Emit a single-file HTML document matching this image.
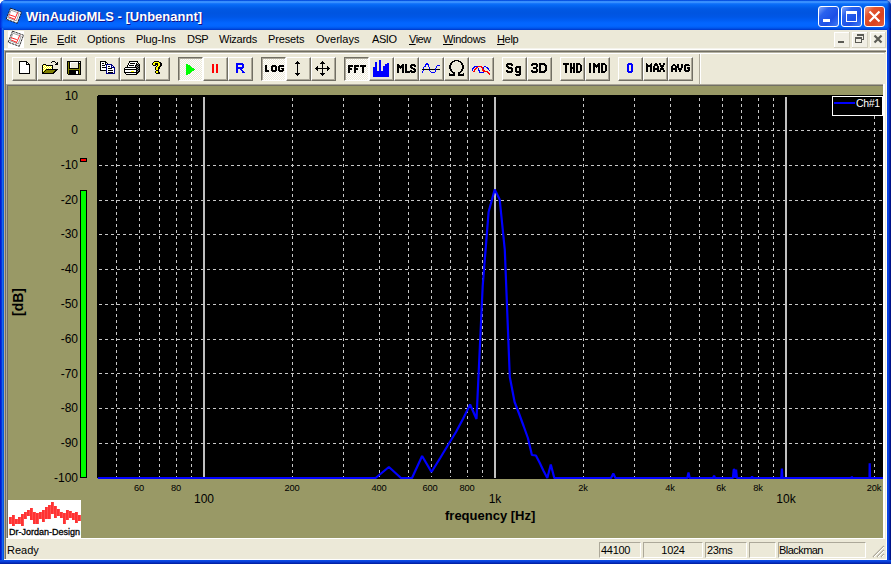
<!DOCTYPE html>
<html><head><meta charset="utf-8"><title>WinAudioMLS - [Unbenannt]</title>
<style>
html,body{margin:0;padding:0;background:#fff;}
body{width:891px;height:564px;overflow:hidden;position:relative;font-family:"Liberation Sans",sans-serif;}
#win{position:absolute;left:0;top:0;width:891px;height:564px;background:#0d4fe6;border-radius:6px 6px 0 0;overflow:hidden;}
#title{position:absolute;left:0;top:0;width:891px;height:30px;
 background:linear-gradient(to bottom,#0040d6 0px,#0d5fea 0.800px,#3d95ff 1.600px,#378fff 2.600px,#1273fa 3.600px,#0569f5 5px,#0360ec 7px,#0058e4 9px,#0055e0 13px,#0057e6 17px,#005df3 20px,#0366ff 23px,#0366ff 26px,#0058ee 28px,#0036c8 30px);}
#title .cap{position:absolute;left:26px;top:9px;font-size:13px;font-weight:bold;color:#fff;text-shadow:1px 1px #0f1089;white-space:nowrap;letter-spacing:0px;}
.bl{position:absolute;top:28px;left:0;width:4px;height:564px;background:linear-gradient(to right,#0019cf 0,#0019cf 1px,#0831d9 1px,#0831d9 2px,#166aee 2px,#166aee 3px,#0855dd 3px);mix-blend-mode:normal;}
.br{position:absolute;top:28px;left:887px;width:4px;height:564px;background:linear-gradient(to right,#0540e8 0,#0540e8 1px,#0a42d8 1px,#0a42d8 2px,#0528b0 2px,#0528b0 3px,#001488 3px);}
.bb{position:absolute;top:560px;left:0;width:891px;height:4px;background:linear-gradient(to bottom,#0d4fe6 0%,#0a42dc 35%,#0530c0 65%,#001a9a 100%);}
#body{position:absolute;left:4px;top:30px;width:883px;height:530px;background:#ece9d8;}
/* all children below positioned in page coords via #abs */
#abs{position:absolute;left:0;top:0;width:891px;height:564px;}
.mi{position:absolute;top:33px;font-size:11px;color:#000;white-space:nowrap;line-height:13px;}
.mi u{text-decoration:underline;text-underline-offset:1px;}
.wb{position:absolute;top:6px;width:21px;height:21px;border-radius:3px;box-sizing:border-box;border:1px solid #fff;}
.tb{position:absolute;top:57px;width:25px;height:24px;box-sizing:border-box;background:#ece9d8;
 border-top:1px solid #fff;border-left:1px solid #fff;border-right:1px solid #716f64;border-bottom:1px solid #716f64;}
.tb:after{content:"";position:absolute;left:0;top:0;right:0;bottom:0;border-right:1px solid #aca899;border-bottom:1px solid #aca899;}
.tb svg{position:absolute;left:-1px;top:-1px;}
.tb.dn{background:repeating-conic-gradient(#fff 0% 25%,#ece9d8 0% 50%) 0 0/2px 2px;border-top:1px solid #716f64;border-left:1px solid #716f64;border-right:1px solid #fff;border-bottom:1px solid #fff;}
.tb.dn:after{border:none;border-top:1px solid #aca899;border-left:1px solid #aca899;}
.tb.dn svg{left:0px;top:0px;}
#client{position:absolute;left:8px;top:86px;width:875px;height:452px;background:#999966;}
.plot{position:absolute;left:97px;top:95px;}
.yl{position:absolute;left:30px;width:48px;text-align:right;font-size:12px;line-height:14px;color:#000;}
.xs{position:absolute;top:482px;width:40px;text-align:center;font-size:9.300px;letter-spacing:-0.100px;line-height:12px;color:#000;}
.xb{position:absolute;top:492px;width:40px;text-align:center;font-size:12px;line-height:15px;color:#000;}
.pane{position:absolute;top:542px;height:16px;box-sizing:border-box;border-top:1px solid #aca899;border-left:1px solid #aca899;border-right:1px solid #fff;border-bottom:1px solid #fff;font-size:11px;line-height:14px;padding-left:2px;white-space:nowrap;overflow:hidden;}
</style></head><body>
<div style="position:absolute;left:881px;top:0;width:10px;height:10px;background:#8fa6e2"></div>
<div id="win">
<div id="title"><div class="cap">WinAudioMLS - [Unbenannt]</div></div>
<div style="position:absolute;left:0;top:0;width:3px;height:30px;background:linear-gradient(to right,rgba(0,25,207,0.850),rgba(0,25,207,0))"></div><div style="position:absolute;left:887px;top:0;width:4px;height:30px;background:linear-gradient(to right,rgba(0,20,136,0),rgba(0,20,136,0.900))"></div><div class="bl"></div><div class="br"></div><div class="bb"></div>
<div id="body"></div>
<div id="abs">
<!-- title icon -->
<svg style="position:absolute;left:5px;top:7px" width="18" height="18" viewBox="0 0 18 18"><path d="M5.500 1.200L16.500 5.200L12.300 16.300L1.200 12.200Z" fill="#fff" stroke="#111" stroke-width="0.900" stroke-dasharray="2.500 0.700"/><path d="M6 3.200L14.200 6.200L11.300 13.800L3 10.800Z" fill="none" stroke="#777" stroke-width="0.700"/><path d="M3.800 7.600l6 2M4 10l5 2M12.800 5.300l-3.600 8" stroke="#f22" stroke-width="1" fill="none"/></svg>
<!-- window buttons -->
<div class="wb" style="left:818px;background:linear-gradient(135deg,#86a8fa 0%,#2a62ee 28%,#1c4fe6 65%,#3f7cf6 100%)"><div style="position:absolute;left:4px;top:12px;width:7px;height:3px;background:#fff"></div></div>
<div class="wb" style="left:841px;background:linear-gradient(135deg,#86a8fa 0%,#2a62ee 28%,#1c4fe6 65%,#3f7cf6 100%)"><div style="position:absolute;left:4px;top:4px;width:11px;height:11px;box-sizing:border-box;border:1px solid #fff;border-top:3px solid #fff"></div></div>
<div class="wb" style="left:864px;background:linear-gradient(135deg,#f0a48e 0%,#e2552f 28%,#d9421e 65%,#e4603f 100%)"><svg width="19" height="19" viewBox="0 0 19 19" style="position:absolute;left:0;top:0"><path d="M4.500 4.500l10 10M14.500 4.500l-10 10" stroke="#fff" stroke-width="2.200"/></svg></div>
<!-- menu bar -->
<div style="position:absolute;left:8px;top:31px;width:16px;height:17px;background:#fff"></div>
<svg style="position:absolute;left:7px;top:30px" width="18" height="18" viewBox="0 0 18 18"><path d="M5.500 1.200L16.500 5.200L12.300 16.300L1.200 12.200Z" fill="#fff" stroke="#111" stroke-width="0.900" stroke-dasharray="2.500 0.700"/><path d="M6 3.200L14.200 6.200L11.300 13.800L3 10.800Z" fill="none" stroke="#777" stroke-width="0.700"/><path d="M3.800 7.600l6 2M4 10l5 2M12.800 5.300l-3.600 8" stroke="#f22" stroke-width="1" fill="none"/></svg>
<span class="mi" style="left:30px;letter-spacing:0px"><u>F</u>ile</span>
<span class="mi" style="left:57px;letter-spacing:0px"><u>E</u>dit</span>
<span class="mi" style="left:87px;letter-spacing:0px">Options</span>
<span class="mi" style="left:136px;letter-spacing:-0.1px">Plug-Ins</span>
<span class="mi" style="left:187px;letter-spacing:-0.5px">DSP</span>
<span class="mi" style="left:219px;letter-spacing:-0.25px">Wizards</span>
<span class="mi" style="left:268px;letter-spacing:-0.15px">Presets</span>
<span class="mi" style="left:316px;letter-spacing:0px">Overlays</span>
<span class="mi" style="left:372px;letter-spacing:-0.4px">ASIO</span>
<span class="mi" style="left:409px;letter-spacing:-0.5px"><u>V</u>iew</span>
<span class="mi" style="left:443px;letter-spacing:-0.3px"><u>W</u>indows</span>
<span class="mi" style="left:497px;letter-spacing:-0.35px"><u>H</u>elp</span>
<!-- mdi buttons -->
<svg style="position:absolute;left:834px;top:32px" width="53" height="16" viewBox="0 0 53 16" shape-rendering="crispEdges">
<g fill="#f1efe5"><rect x="0" y="0" width="16" height="16"/><rect x="18" y="0" width="16" height="16"/><rect x="36" y="0" width="16" height="16"/></g>
<g fill="#fff"><rect x="0" y="0" width="16" height="1"/><rect x="0" y="0" width="1" height="16"/><rect x="18" y="0" width="16" height="1"/><rect x="18" y="0" width="1" height="16"/><rect x="36" y="0" width="16" height="1"/><rect x="36" y="0" width="1" height="16"/></g>
<g fill="#d3d0c0"><rect x="0" y="15" width="16" height="1"/><rect x="15" y="0" width="1" height="16"/><rect x="18" y="15" width="16" height="1"/><rect x="33" y="0" width="1" height="16"/><rect x="36" y="15" width="16" height="1"/><rect x="51" y="0" width="1" height="16"/></g>
<g fill="#5b5b55"><rect x="4" y="9" width="6" height="2"/>
<rect x="23" y="2" width="7" height="2"/><rect x="29" y="2" width="1" height="6"/><rect x="27" y="7" width="3" height="1"/>
<rect x="21" y="5" width="7" height="2"/><rect x="21" y="5" width="1" height="6"/><rect x="27" y="5" width="1" height="6"/><rect x="21" y="10" width="7" height="1"/></g>
<path d="M40.500 3.500l7 7M47.500 3.500l-7 7" stroke="#5b5b55" stroke-width="2.200" shape-rendering="auto"/>
</svg>
<!-- toolbar frame -->
<div style="position:absolute;left:4px;top:48px;width:883px;height:1px;background:#f6f4ec"></div>
<div style="position:absolute;left:4px;top:49px;width:883px;height:1px;background:#fff"></div>
<div style="position:absolute;left:4px;top:50px;width:883px;height:1px;background:#aca899"></div>
<div style="position:absolute;left:4px;top:51px;width:883px;height:1px;background:#716f64"></div>
<div style="position:absolute;left:5px;top:52px;width:880px;height:1px;background:#b5b2a2"></div>
<div style="position:absolute;left:6px;top:53px;width:878px;height:1px;background:#fff"></div>
<div style="position:absolute;left:4px;top:50px;width:1px;height:509px;background:#b4ac98"></div>
<div style="position:absolute;left:5px;top:51px;width:1px;height:508px;background:#716f64"></div>
<div style="position:absolute;left:6px;top:53px;width:1px;height:31px;background:#fffbf0"></div>
<div style="position:absolute;left:885px;top:52px;width:1px;height:507px;background:#ece9d8"></div>
<div style="position:absolute;left:886px;top:50px;width:1px;height:510px;background:#fffff4"></div>
<div style="position:absolute;left:4px;top:559px;width:883px;height:1px;background:#fff"></div>
<div style="position:absolute;left:699px;top:54px;width:1px;height:30px;background:#aca899"></div>
<div style="position:absolute;left:700px;top:54px;width:1px;height:30px;background:#fff"></div>
<div class="tb" style="left:12px"></div>
<div class="tb" style="left:37px"></div>
<div class="tb" style="left:62px"></div>
<div class="tb" style="left:95px"></div>
<div class="tb" style="left:120px"></div>
<div class="tb" style="left:145px"></div>
<div class="tb dn" style="left:178px"></div>
<div class="tb" style="left:203px"></div>
<div class="tb" style="left:228px"></div>
<div class="tb dn" style="left:261px"></div>
<div class="tb" style="left:286px"></div>
<div class="tb" style="left:311px"></div>
<div class="tb dn" style="left:344px"></div>
<div class="tb" style="left:369px"></div>
<div class="tb" style="left:394px"></div>
<div class="tb" style="left:419px"></div>
<div class="tb" style="left:444px"></div>
<div class="tb" style="left:469px"></div>
<div class="tb" style="left:502px"></div>
<div class="tb" style="left:527px"></div>
<div class="tb" style="left:560px"></div>
<div class="tb" style="left:585px"></div>
<div class="tb" style="left:618px"></div>
<div class="tb" style="left:643px"></div>
<div class="tb" style="left:668px"></div>
<svg style="position:absolute;left:0;top:50px" width="891" height="36" viewBox="0 0 891 36" shape-rendering="crispEdges"><rect x="19" y="11" width="8" height="1" fill="#000"/><rect x="19" y="12" width="1" height="1" fill="#000"/><rect x="20" y="12" width="6" height="1" fill="#fff"/><rect x="26" y="12" width="2" height="1" fill="#000"/><rect x="19" y="13" width="1" height="1" fill="#000"/><rect x="20" y="13" width="6" height="1" fill="#fff"/><rect x="26" y="13" width="1" height="1" fill="#000"/><rect x="27" y="13" width="1" height="1" fill="#fff"/><rect x="28" y="13" width="1" height="1" fill="#000"/><rect x="19" y="14" width="1" height="1" fill="#000"/><rect x="20" y="14" width="6" height="1" fill="#fff"/><rect x="26" y="14" width="4" height="1" fill="#000"/><rect x="19" y="15" width="1" height="1" fill="#000"/><rect x="20" y="15" width="9" height="1" fill="#fff"/><rect x="29" y="15" width="1" height="1" fill="#000"/><rect x="19" y="16" width="1" height="1" fill="#000"/><rect x="20" y="16" width="9" height="1" fill="#fff"/><rect x="29" y="16" width="1" height="1" fill="#000"/><rect x="19" y="17" width="1" height="1" fill="#000"/><rect x="20" y="17" width="9" height="1" fill="#fff"/><rect x="29" y="17" width="1" height="1" fill="#000"/><rect x="19" y="18" width="1" height="1" fill="#000"/><rect x="20" y="18" width="9" height="1" fill="#fff"/><rect x="29" y="18" width="1" height="1" fill="#000"/><rect x="19" y="19" width="1" height="1" fill="#000"/><rect x="20" y="19" width="9" height="1" fill="#fff"/><rect x="29" y="19" width="1" height="1" fill="#000"/><rect x="19" y="20" width="1" height="1" fill="#000"/><rect x="20" y="20" width="9" height="1" fill="#fff"/><rect x="29" y="20" width="1" height="1" fill="#000"/><rect x="19" y="21" width="1" height="1" fill="#000"/><rect x="20" y="21" width="9" height="1" fill="#fff"/><rect x="29" y="21" width="1" height="1" fill="#000"/><rect x="19" y="22" width="1" height="1" fill="#000"/><rect x="20" y="22" width="9" height="1" fill="#fff"/><rect x="29" y="22" width="1" height="1" fill="#000"/><rect x="19" y="23" width="11" height="1" fill="#000"/><rect x="52" y="11" width="3" height="1" fill="#000"/><rect x="51" y="12" width="1" height="1" fill="#000"/><rect x="55" y="12" width="1" height="1" fill="#000"/><rect x="57" y="12" width="1" height="1" fill="#000"/><rect x="56" y="13" width="2" height="1" fill="#000"/><rect x="43" y="14" width="3" height="1" fill="#000"/><rect x="55" y="14" width="3" height="1" fill="#000"/><rect x="42" y="15" width="1" height="1" fill="#000"/><rect x="43" y="15" width="1" height="1" fill="#ff0"/><rect x="44" y="15" width="1" height="1" fill="#fff"/><rect x="45" y="15" width="1" height="1" fill="#ff0"/><rect x="46" y="15" width="7" height="1" fill="#000"/><rect x="42" y="16" width="1" height="1" fill="#000"/><rect x="43" y="16" width="1" height="1" fill="#fff"/><rect x="44" y="16" width="1" height="1" fill="#ff0"/><rect x="45" y="16" width="1" height="1" fill="#fff"/><rect x="46" y="16" width="1" height="1" fill="#ff0"/><rect x="47" y="16" width="1" height="1" fill="#fff"/><rect x="48" y="16" width="1" height="1" fill="#ff0"/><rect x="49" y="16" width="1" height="1" fill="#fff"/><rect x="50" y="16" width="1" height="1" fill="#ff0"/><rect x="51" y="16" width="1" height="1" fill="#fff"/><rect x="52" y="16" width="1" height="1" fill="#000"/><rect x="42" y="17" width="1" height="1" fill="#000"/><rect x="43" y="17" width="1" height="1" fill="#ff0"/><rect x="44" y="17" width="1" height="1" fill="#fff"/><rect x="45" y="17" width="1" height="1" fill="#ff0"/><rect x="46" y="17" width="1" height="1" fill="#fff"/><rect x="47" y="17" width="1" height="1" fill="#ff0"/><rect x="48" y="17" width="1" height="1" fill="#fff"/><rect x="49" y="17" width="1" height="1" fill="#ff0"/><rect x="50" y="17" width="1" height="1" fill="#fff"/><rect x="51" y="17" width="1" height="1" fill="#ff0"/><rect x="52" y="17" width="1" height="1" fill="#000"/><rect x="42" y="18" width="1" height="1" fill="#000"/><rect x="43" y="18" width="1" height="1" fill="#fff"/><rect x="44" y="18" width="1" height="1" fill="#ff0"/><rect x="45" y="18" width="1" height="1" fill="#fff"/><rect x="46" y="18" width="1" height="1" fill="#ff0"/><rect x="47" y="18" width="1" height="1" fill="#fff"/><rect x="48" y="18" width="1" height="1" fill="#ff0"/><rect x="49" y="18" width="1" height="1" fill="#fff"/><rect x="50" y="18" width="1" height="1" fill="#ff0"/><rect x="51" y="18" width="1" height="1" fill="#fff"/><rect x="52" y="18" width="1" height="1" fill="#000"/><rect x="42" y="19" width="1" height="1" fill="#000"/><rect x="43" y="19" width="1" height="1" fill="#ff0"/><rect x="44" y="19" width="1" height="1" fill="#fff"/><rect x="45" y="19" width="1" height="1" fill="#ff0"/><rect x="46" y="19" width="12" height="1" fill="#000"/><rect x="42" y="20" width="1" height="1" fill="#000"/><rect x="43" y="20" width="1" height="1" fill="#fff"/><rect x="44" y="20" width="1" height="1" fill="#ff0"/><rect x="45" y="20" width="1" height="1" fill="#000"/><rect x="46" y="20" width="9" height="1" fill="#808000"/><rect x="55" y="20" width="2" height="1" fill="#000"/><rect x="42" y="21" width="1" height="1" fill="#000"/><rect x="43" y="21" width="1" height="1" fill="#ff0"/><rect x="44" y="21" width="1" height="1" fill="#000"/><rect x="45" y="21" width="9" height="1" fill="#808000"/><rect x="54" y="21" width="2" height="1" fill="#000"/><rect x="42" y="22" width="2" height="1" fill="#000"/><rect x="44" y="22" width="9" height="1" fill="#808000"/><rect x="53" y="22" width="2" height="1" fill="#000"/><rect x="42" y="23" width="12" height="1" fill="#000"/><rect x="67" y="11" width="14" height="1" fill="#000"/><rect x="67" y="12" width="1" height="1" fill="#000"/><rect x="68" y="12" width="1" height="1" fill="#808000"/><rect x="69" y="12" width="1" height="1" fill="#000"/><rect x="70" y="12" width="8" height="1" fill="#fff"/><rect x="78" y="12" width="1" height="1" fill="#000"/><rect x="79" y="12" width="1" height="1" fill="#fff"/><rect x="80" y="12" width="1" height="1" fill="#000"/><rect x="67" y="13" width="1" height="1" fill="#000"/><rect x="68" y="13" width="1" height="1" fill="#808000"/><rect x="69" y="13" width="1" height="1" fill="#000"/><rect x="70" y="13" width="1" height="1" fill="#fff"/><rect x="71" y="13" width="7" height="1" fill="#ece9d8"/><rect x="78" y="13" width="3" height="1" fill="#000"/><rect x="67" y="14" width="1" height="1" fill="#000"/><rect x="68" y="14" width="1" height="1" fill="#808000"/><rect x="69" y="14" width="1" height="1" fill="#000"/><rect x="70" y="14" width="1" height="1" fill="#fff"/><rect x="71" y="14" width="7" height="1" fill="#ece9d8"/><rect x="78" y="14" width="1" height="1" fill="#000"/><rect x="79" y="14" width="1" height="1" fill="#808000"/><rect x="80" y="14" width="1" height="1" fill="#000"/><rect x="67" y="15" width="1" height="1" fill="#000"/><rect x="68" y="15" width="1" height="1" fill="#808000"/><rect x="69" y="15" width="1" height="1" fill="#000"/><rect x="70" y="15" width="1" height="1" fill="#fff"/><rect x="71" y="15" width="7" height="1" fill="#ece9d8"/><rect x="78" y="15" width="1" height="1" fill="#000"/><rect x="79" y="15" width="1" height="1" fill="#808000"/><rect x="80" y="15" width="1" height="1" fill="#000"/><rect x="67" y="16" width="1" height="1" fill="#000"/><rect x="68" y="16" width="1" height="1" fill="#808000"/><rect x="69" y="16" width="1" height="1" fill="#000"/><rect x="70" y="16" width="1" height="1" fill="#fff"/><rect x="71" y="16" width="7" height="1" fill="#ece9d8"/><rect x="78" y="16" width="1" height="1" fill="#000"/><rect x="79" y="16" width="1" height="1" fill="#808000"/><rect x="80" y="16" width="1" height="1" fill="#000"/><rect x="67" y="17" width="1" height="1" fill="#000"/><rect x="68" y="17" width="1" height="1" fill="#808000"/><rect x="69" y="17" width="1" height="1" fill="#000"/><rect x="70" y="17" width="1" height="1" fill="#fff"/><rect x="71" y="17" width="7" height="1" fill="#ece9d8"/><rect x="78" y="17" width="1" height="1" fill="#000"/><rect x="79" y="17" width="1" height="1" fill="#808000"/><rect x="80" y="17" width="1" height="1" fill="#000"/><rect x="67" y="18" width="1" height="1" fill="#000"/><rect x="68" y="18" width="1" height="1" fill="#808000"/><rect x="69" y="18" width="10" height="1" fill="#000"/><rect x="79" y="18" width="1" height="1" fill="#808000"/><rect x="80" y="18" width="1" height="1" fill="#000"/><rect x="67" y="19" width="1" height="1" fill="#000"/><rect x="68" y="19" width="12" height="1" fill="#808000"/><rect x="80" y="19" width="1" height="1" fill="#000"/><rect x="67" y="20" width="1" height="1" fill="#000"/><rect x="68" y="20" width="1" height="1" fill="#808000"/><rect x="69" y="20" width="10" height="1" fill="#000"/><rect x="79" y="20" width="1" height="1" fill="#808000"/><rect x="80" y="20" width="1" height="1" fill="#000"/><rect x="67" y="21" width="1" height="1" fill="#000"/><rect x="68" y="21" width="1" height="1" fill="#808000"/><rect x="69" y="21" width="7" height="1" fill="#000"/><rect x="76" y="21" width="2" height="1" fill="#fff"/><rect x="78" y="21" width="1" height="1" fill="#000"/><rect x="79" y="21" width="1" height="1" fill="#808000"/><rect x="80" y="21" width="1" height="1" fill="#000"/><rect x="67" y="22" width="1" height="1" fill="#000"/><rect x="68" y="22" width="1" height="1" fill="#808000"/><rect x="69" y="22" width="7" height="1" fill="#000"/><rect x="76" y="22" width="2" height="1" fill="#fff"/><rect x="78" y="22" width="1" height="1" fill="#000"/><rect x="79" y="22" width="1" height="1" fill="#808000"/><rect x="80" y="22" width="1" height="1" fill="#000"/><rect x="67" y="23" width="1" height="1" fill="#000"/><rect x="68" y="23" width="1" height="1" fill="#808000"/><rect x="69" y="23" width="7" height="1" fill="#000"/><rect x="76" y="23" width="2" height="1" fill="#fff"/><rect x="78" y="23" width="1" height="1" fill="#000"/><rect x="79" y="23" width="1" height="1" fill="#808000"/><rect x="80" y="23" width="1" height="1" fill="#000"/><rect x="68" y="24" width="13" height="1" fill="#000"/><rect x="100" y="11" width="6" height="1" fill="#000"/><rect x="100" y="12" width="1" height="1" fill="#000"/><rect x="101" y="12" width="4" height="1" fill="#fff"/><rect x="105" y="12" width="2" height="1" fill="#000"/><rect x="100" y="13" width="1" height="1" fill="#000"/><rect x="101" y="13" width="1" height="1" fill="#fff"/><rect x="102" y="13" width="2" height="1" fill="#000"/><rect x="104" y="13" width="1" height="1" fill="#fff"/><rect x="105" y="13" width="1" height="1" fill="#000"/><rect x="106" y="13" width="1" height="1" fill="#fff"/><rect x="107" y="13" width="1" height="1" fill="#000"/><rect x="100" y="14" width="1" height="1" fill="#000"/><rect x="101" y="14" width="4" height="1" fill="#fff"/><rect x="105" y="14" width="1" height="1" fill="#000"/><rect x="106" y="14" width="6" height="1" fill="#000080"/><rect x="100" y="15" width="1" height="1" fill="#000"/><rect x="101" y="15" width="1" height="1" fill="#fff"/><rect x="102" y="15" width="3" height="1" fill="#000"/><rect x="105" y="15" width="1" height="1" fill="#fff"/><rect x="106" y="15" width="1" height="1" fill="#000080"/><rect x="107" y="15" width="4" height="1" fill="#fff"/><rect x="111" y="15" width="2" height="1" fill="#000080"/><rect x="100" y="16" width="1" height="1" fill="#000"/><rect x="101" y="16" width="5" height="1" fill="#fff"/><rect x="106" y="16" width="1" height="1" fill="#000080"/><rect x="107" y="16" width="1" height="1" fill="#fff"/><rect x="108" y="16" width="2" height="1" fill="#000"/><rect x="110" y="16" width="1" height="1" fill="#fff"/><rect x="111" y="16" width="1" height="1" fill="#000080"/><rect x="112" y="16" width="1" height="1" fill="#fff"/><rect x="113" y="16" width="1" height="1" fill="#000080"/><rect x="100" y="17" width="1" height="1" fill="#000"/><rect x="101" y="17" width="1" height="1" fill="#fff"/><rect x="102" y="17" width="4" height="1" fill="#000"/><rect x="106" y="17" width="1" height="1" fill="#000080"/><rect x="107" y="17" width="4" height="1" fill="#fff"/><rect x="111" y="17" width="4" height="1" fill="#000080"/><rect x="100" y="18" width="1" height="1" fill="#000"/><rect x="101" y="18" width="5" height="1" fill="#fff"/><rect x="106" y="18" width="1" height="1" fill="#000080"/><rect x="107" y="18" width="1" height="1" fill="#fff"/><rect x="108" y="18" width="4" height="1" fill="#000"/><rect x="112" y="18" width="2" height="1" fill="#fff"/><rect x="114" y="18" width="1" height="1" fill="#000080"/><rect x="100" y="19" width="1" height="1" fill="#000"/><rect x="101" y="19" width="5" height="1" fill="#fff"/><rect x="106" y="19" width="1" height="1" fill="#000080"/><rect x="107" y="19" width="7" height="1" fill="#fff"/><rect x="114" y="19" width="1" height="1" fill="#000080"/><rect x="100" y="20" width="6" height="1" fill="#000"/><rect x="106" y="20" width="1" height="1" fill="#000080"/><rect x="107" y="20" width="1" height="1" fill="#fff"/><rect x="108" y="20" width="5" height="1" fill="#000"/><rect x="113" y="20" width="1" height="1" fill="#fff"/><rect x="114" y="20" width="1" height="1" fill="#000080"/><rect x="106" y="21" width="1" height="1" fill="#000080"/><rect x="107" y="21" width="7" height="1" fill="#fff"/><rect x="114" y="21" width="1" height="1" fill="#000080"/><rect x="106" y="22" width="1" height="1" fill="#000080"/><rect x="107" y="22" width="1" height="1" fill="#fff"/><rect x="108" y="22" width="5" height="1" fill="#000"/><rect x="113" y="22" width="1" height="1" fill="#fff"/><rect x="114" y="22" width="1" height="1" fill="#000080"/><rect x="106" y="23" width="9" height="1" fill="#000080"/><rect x="129" y="11" width="9" height="1" fill="#000"/><rect x="129" y="12" width="1" height="1" fill="#000"/><rect x="130" y="12" width="7" height="1" fill="#fff"/><rect x="137" y="12" width="1" height="1" fill="#000"/><rect x="128" y="13" width="1" height="1" fill="#000"/><rect x="129" y="13" width="1" height="1" fill="#fff"/><rect x="130" y="13" width="5" height="1" fill="#000"/><rect x="135" y="13" width="1" height="1" fill="#fff"/><rect x="136" y="13" width="1" height="1" fill="#000"/><rect x="138" y="13" width="1" height="1" fill="#000"/><rect x="128" y="14" width="1" height="1" fill="#000"/><rect x="129" y="14" width="7" height="1" fill="#fff"/><rect x="136" y="14" width="2" height="1" fill="#000"/><rect x="138" y="14" width="1" height="1" fill="#808080"/><rect x="139" y="14" width="1" height="1" fill="#000"/><rect x="127" y="15" width="1" height="1" fill="#000"/><rect x="128" y="15" width="1" height="1" fill="#fff"/><rect x="129" y="15" width="5" height="1" fill="#000"/><rect x="134" y="15" width="1" height="1" fill="#fff"/><rect x="135" y="15" width="2" height="1" fill="#000"/><rect x="137" y="15" width="1" height="1" fill="#808080"/><rect x="138" y="15" width="2" height="1" fill="#000"/><rect x="127" y="16" width="1" height="1" fill="#000"/><rect x="128" y="16" width="7" height="1" fill="#fff"/><rect x="135" y="16" width="1" height="1" fill="#000"/><rect x="136" y="16" width="1" height="1" fill="#808080"/><rect x="137" y="16" width="1" height="1" fill="#000"/><rect x="138" y="16" width="1" height="1" fill="#808080"/><rect x="139" y="16" width="1" height="1" fill="#000"/><rect x="125" y="17" width="12" height="1" fill="#000"/><rect x="137" y="17" width="1" height="1" fill="#808080"/><rect x="138" y="17" width="2" height="1" fill="#000"/><rect x="124" y="18" width="1" height="1" fill="#000"/><rect x="125" y="18" width="11" height="1" fill="#fff"/><rect x="136" y="18" width="2" height="1" fill="#000"/><rect x="138" y="18" width="1" height="1" fill="#808080"/><rect x="139" y="18" width="1" height="1" fill="#000"/><rect x="124" y="19" width="13" height="1" fill="#000"/><rect x="137" y="19" width="1" height="1" fill="#808080"/><rect x="138" y="19" width="2" height="1" fill="#000"/><rect x="124" y="20" width="1" height="1" fill="#000"/><rect x="125" y="20" width="11" height="1" fill="#fff"/><rect x="136" y="20" width="2" height="1" fill="#000"/><rect x="138" y="20" width="1" height="1" fill="#808080"/><rect x="139" y="20" width="1" height="1" fill="#000"/><rect x="124" y="21" width="1" height="1" fill="#000"/><rect x="125" y="21" width="6" height="1" fill="#fff"/><rect x="131" y="21" width="3" height="1" fill="#ff0"/><rect x="134" y="21" width="2" height="1" fill="#fff"/><rect x="136" y="21" width="1" height="1" fill="#000"/><rect x="137" y="21" width="1" height="1" fill="#808080"/><rect x="138" y="21" width="2" height="1" fill="#000"/><rect x="124" y="22" width="15" height="1" fill="#000"/><rect x="125" y="23" width="1" height="1" fill="#000"/><rect x="126" y="23" width="10" height="1" fill="#fff"/><rect x="136" y="23" width="2" height="1" fill="#000"/><rect x="126" y="24" width="11" height="1" fill="#000"/><rect x="154" y="11" width="5" height="1" fill="#000"/><rect x="153" y="12" width="1" height="1" fill="#000"/><rect x="154" y="12" width="5" height="1" fill="#ff0"/><rect x="159" y="12" width="2" height="1" fill="#000"/><rect x="152" y="13" width="1" height="1" fill="#000"/><rect x="153" y="13" width="2" height="1" fill="#ff0"/><rect x="155" y="13" width="3" height="1" fill="#000"/><rect x="158" y="13" width="2" height="1" fill="#ff0"/><rect x="160" y="13" width="2" height="1" fill="#000"/><rect x="152" y="14" width="1" height="1" fill="#000"/><rect x="153" y="14" width="2" height="1" fill="#ff0"/><rect x="155" y="14" width="3" height="1" fill="#000"/><rect x="158" y="14" width="2" height="1" fill="#ff0"/><rect x="160" y="14" width="2" height="1" fill="#000"/><rect x="153" y="15" width="3" height="1" fill="#000"/><rect x="157" y="15" width="1" height="1" fill="#000"/><rect x="158" y="15" width="2" height="1" fill="#ff0"/><rect x="160" y="15" width="2" height="1" fill="#000"/><rect x="156" y="16" width="1" height="1" fill="#000"/><rect x="157" y="16" width="2" height="1" fill="#ff0"/><rect x="159" y="16" width="2" height="1" fill="#000"/><rect x="155" y="17" width="1" height="1" fill="#000"/><rect x="156" y="17" width="2" height="1" fill="#ff0"/><rect x="158" y="17" width="2" height="1" fill="#000"/><rect x="155" y="18" width="1" height="1" fill="#000"/><rect x="156" y="18" width="2" height="1" fill="#ff0"/><rect x="158" y="18" width="2" height="1" fill="#000"/><rect x="155" y="19" width="1" height="1" fill="#000"/><rect x="156" y="19" width="2" height="1" fill="#ff0"/><rect x="158" y="19" width="1" height="1" fill="#000"/><rect x="156" y="20" width="3" height="1" fill="#000"/><rect x="155" y="21" width="1" height="1" fill="#000"/><rect x="156" y="21" width="2" height="1" fill="#ff0"/><rect x="158" y="21" width="1" height="1" fill="#000"/><rect x="155" y="22" width="1" height="1" fill="#000"/><rect x="156" y="22" width="2" height="1" fill="#ff0"/><rect x="158" y="22" width="2" height="1" fill="#000"/><rect x="156" y="23" width="4" height="1" fill="#000"/><rect x="186" y="14" width="2" height="1" fill="#0f0"/><rect x="186" y="15" width="4" height="1" fill="#0f0"/><rect x="186" y="16" width="5" height="1" fill="#0f0"/><rect x="186" y="17" width="6" height="1" fill="#0f0"/><rect x="186" y="18" width="8" height="1" fill="#0f0"/><rect x="186" y="19" width="9" height="1" fill="#0f0"/><rect x="186" y="20" width="8" height="1" fill="#0f0"/><rect x="186" y="21" width="6" height="1" fill="#0f0"/><rect x="186" y="22" width="5" height="1" fill="#0f0"/><rect x="186" y="23" width="4" height="1" fill="#0f0"/><rect x="186" y="24" width="2" height="1" fill="#0f0"/><rect x="212" y="14" width="2" height="1" fill="#f00"/><rect x="216" y="14" width="2" height="1" fill="#f00"/><rect x="212" y="15" width="2" height="1" fill="#f00"/><rect x="216" y="15" width="2" height="1" fill="#f00"/><rect x="212" y="16" width="2" height="1" fill="#f00"/><rect x="216" y="16" width="2" height="1" fill="#f00"/><rect x="212" y="17" width="2" height="1" fill="#f00"/><rect x="216" y="17" width="2" height="1" fill="#f00"/><rect x="212" y="18" width="2" height="1" fill="#f00"/><rect x="216" y="18" width="2" height="1" fill="#f00"/><rect x="212" y="19" width="2" height="1" fill="#f00"/><rect x="216" y="19" width="2" height="1" fill="#f00"/><rect x="212" y="20" width="2" height="1" fill="#f00"/><rect x="216" y="20" width="2" height="1" fill="#f00"/><rect x="212" y="21" width="2" height="1" fill="#f00"/><rect x="216" y="21" width="2" height="1" fill="#f00"/><rect x="212" y="22" width="2" height="1" fill="#f00"/><rect x="216" y="22" width="2" height="1" fill="#f00"/><rect x="236" y="13" width="7" height="1" fill="#00f"/><rect x="236" y="14" width="8" height="1" fill="#00f"/><rect x="236" y="15" width="2" height="1" fill="#00f"/><rect x="242" y="15" width="2" height="1" fill="#00f"/><rect x="236" y="16" width="2" height="1" fill="#00f"/><rect x="242" y="16" width="2" height="1" fill="#00f"/><rect x="236" y="17" width="8" height="1" fill="#00f"/><rect x="236" y="18" width="7" height="1" fill="#00f"/><rect x="236" y="19" width="2" height="1" fill="#00f"/><rect x="240" y="19" width="2" height="1" fill="#00f"/><rect x="236" y="20" width="2" height="1" fill="#00f"/><rect x="241" y="20" width="2" height="1" fill="#00f"/><rect x="236" y="21" width="2" height="1" fill="#00f"/><rect x="242" y="21" width="2" height="1" fill="#00f"/><rect x="236" y="22" width="2" height="1" fill="#00f"/><rect x="242" y="22" width="3" height="1" fill="#00f"/><rect x="265" y="15" width="2" height="1" fill="#000"/><rect x="265" y="16" width="2" height="1" fill="#000"/><rect x="265" y="17" width="2" height="1" fill="#000"/><rect x="265" y="18" width="2" height="1" fill="#000"/><rect x="265" y="19" width="2" height="1" fill="#000"/><rect x="265" y="20" width="4" height="1" fill="#000"/><rect x="265" y="21" width="4" height="1" fill="#000"/><rect x="272" y="15" width="4" height="1" fill="#000"/><rect x="271" y="16" width="6" height="1" fill="#000"/><rect x="271" y="17" width="2" height="1" fill="#000"/><rect x="275" y="17" width="2" height="1" fill="#000"/><rect x="271" y="18" width="2" height="1" fill="#000"/><rect x="275" y="18" width="2" height="1" fill="#000"/><rect x="271" y="19" width="2" height="1" fill="#000"/><rect x="275" y="19" width="2" height="1" fill="#000"/><rect x="271" y="20" width="6" height="1" fill="#000"/><rect x="272" y="21" width="4" height="1" fill="#000"/><rect x="279" y="15" width="5" height="1" fill="#000"/><rect x="278" y="16" width="6" height="1" fill="#000"/><rect x="278" y="17" width="2" height="1" fill="#000"/><rect x="278" y="18" width="2" height="1" fill="#000"/><rect x="281" y="18" width="3" height="1" fill="#000"/><rect x="278" y="19" width="2" height="1" fill="#000"/><rect x="282" y="19" width="2" height="1" fill="#000"/><rect x="278" y="20" width="6" height="1" fill="#000"/><rect x="279" y="21" width="4" height="1" fill="#000"/><rect x="297" y="11" width="1" height="1" fill="#000"/><rect x="296" y="12" width="3" height="1" fill="#000"/><rect x="295" y="13" width="5" height="1" fill="#000"/><rect x="297" y="14" width="1" height="1" fill="#000"/><rect x="297" y="15" width="1" height="1" fill="#000"/><rect x="297" y="16" width="1" height="1" fill="#000"/><rect x="297" y="17" width="1" height="1" fill="#000"/><rect x="297" y="18" width="1" height="1" fill="#000"/><rect x="297" y="19" width="1" height="1" fill="#000"/><rect x="297" y="20" width="1" height="1" fill="#000"/><rect x="297" y="21" width="1" height="1" fill="#000"/><rect x="297" y="22" width="1" height="1" fill="#000"/><rect x="295" y="23" width="5" height="1" fill="#000"/><rect x="296" y="24" width="3" height="1" fill="#000"/><rect x="297" y="25" width="1" height="1" fill="#000"/><rect x="322" y="11" width="1" height="1" fill="#000"/><rect x="321" y="12" width="3" height="1" fill="#000"/><rect x="320" y="13" width="5" height="1" fill="#000"/><rect x="322" y="14" width="1" height="1" fill="#000"/><rect x="322" y="15" width="1" height="1" fill="#000"/><rect x="317" y="16" width="1" height="1" fill="#000"/><rect x="322" y="16" width="1" height="1" fill="#000"/><rect x="327" y="16" width="1" height="1" fill="#000"/><rect x="316" y="17" width="2" height="1" fill="#000"/><rect x="322" y="17" width="1" height="1" fill="#000"/><rect x="327" y="17" width="2" height="1" fill="#000"/><rect x="315" y="18" width="15" height="1" fill="#000"/><rect x="316" y="19" width="2" height="1" fill="#000"/><rect x="322" y="19" width="1" height="1" fill="#000"/><rect x="327" y="19" width="2" height="1" fill="#000"/><rect x="317" y="20" width="1" height="1" fill="#000"/><rect x="322" y="20" width="1" height="1" fill="#000"/><rect x="327" y="20" width="1" height="1" fill="#000"/><rect x="322" y="21" width="1" height="1" fill="#000"/><rect x="322" y="22" width="1" height="1" fill="#000"/><rect x="320" y="23" width="5" height="1" fill="#000"/><rect x="321" y="24" width="3" height="1" fill="#000"/><rect x="322" y="25" width="1" height="1" fill="#000"/><rect x="348" y="15" width="5" height="1" fill="#000"/><rect x="348" y="16" width="5" height="1" fill="#000"/><rect x="348" y="17" width="2" height="1" fill="#000"/><rect x="348" y="18" width="4" height="1" fill="#000"/><rect x="348" y="19" width="4" height="1" fill="#000"/><rect x="348" y="20" width="2" height="1" fill="#000"/><rect x="348" y="21" width="2" height="1" fill="#000"/><rect x="348" y="22" width="2" height="1" fill="#000"/><rect x="354" y="15" width="5" height="1" fill="#000"/><rect x="354" y="16" width="5" height="1" fill="#000"/><rect x="354" y="17" width="2" height="1" fill="#000"/><rect x="354" y="18" width="4" height="1" fill="#000"/><rect x="354" y="19" width="4" height="1" fill="#000"/><rect x="354" y="20" width="2" height="1" fill="#000"/><rect x="354" y="21" width="2" height="1" fill="#000"/><rect x="354" y="22" width="2" height="1" fill="#000"/><rect x="360" y="15" width="6" height="1" fill="#000"/><rect x="360" y="16" width="6" height="1" fill="#000"/><rect x="362" y="17" width="2" height="1" fill="#000"/><rect x="362" y="18" width="2" height="1" fill="#000"/><rect x="362" y="19" width="2" height="1" fill="#000"/><rect x="362" y="20" width="2" height="1" fill="#000"/><rect x="362" y="21" width="2" height="1" fill="#000"/><rect x="362" y="22" width="2" height="1" fill="#000"/><rect x="379" y="10" width="2" height="1" fill="#00f"/><rect x="379" y="11" width="2" height="1" fill="#00f"/><rect x="375" y="12" width="2" height="1" fill="#00f"/><rect x="379" y="12" width="2" height="1" fill="#00f"/><rect x="375" y="13" width="2" height="1" fill="#00f"/><rect x="379" y="13" width="2" height="1" fill="#00f"/><rect x="387" y="13" width="2" height="1" fill="#00f"/><rect x="375" y="14" width="2" height="1" fill="#00f"/><rect x="379" y="14" width="2" height="1" fill="#00f"/><rect x="385" y="14" width="4" height="1" fill="#00f"/><rect x="375" y="15" width="2" height="1" fill="#00f"/><rect x="379" y="15" width="2" height="1" fill="#00f"/><rect x="385" y="15" width="4" height="1" fill="#00f"/><rect x="375" y="16" width="2" height="1" fill="#00f"/><rect x="379" y="16" width="2" height="1" fill="#00f"/><rect x="383" y="16" width="6" height="1" fill="#00f"/><rect x="373" y="17" width="4" height="1" fill="#00f"/><rect x="379" y="17" width="2" height="1" fill="#00f"/><rect x="383" y="17" width="6" height="1" fill="#00f"/><rect x="373" y="18" width="4" height="1" fill="#00f"/><rect x="379" y="18" width="2" height="1" fill="#00f"/><rect x="383" y="18" width="6" height="1" fill="#00f"/><rect x="373" y="19" width="4" height="1" fill="#00f"/><rect x="379" y="19" width="2" height="1" fill="#00f"/><rect x="383" y="19" width="6" height="1" fill="#00f"/><rect x="373" y="20" width="4" height="1" fill="#00f"/><rect x="379" y="20" width="2" height="1" fill="#00f"/><rect x="383" y="20" width="6" height="1" fill="#00f"/><rect x="373" y="21" width="16" height="1" fill="#00f"/><rect x="373" y="22" width="16" height="1" fill="#00f"/><rect x="373" y="23" width="16" height="1" fill="#00f"/><rect x="373" y="24" width="16" height="1" fill="#00f"/><rect x="373" y="25" width="16" height="1" fill="#00f"/><rect x="373" y="26" width="16" height="1" fill="#00f"/><rect x="397" y="14" width="2" height="1" fill="#000"/><rect x="402" y="14" width="2" height="1" fill="#000"/><rect x="397" y="15" width="3" height="1" fill="#000"/><rect x="401" y="15" width="3" height="1" fill="#000"/><rect x="397" y="16" width="7" height="1" fill="#000"/><rect x="397" y="17" width="7" height="1" fill="#000"/><rect x="397" y="18" width="2" height="1" fill="#000"/><rect x="400" y="18" width="1" height="1" fill="#000"/><rect x="402" y="18" width="2" height="1" fill="#000"/><rect x="397" y="19" width="2" height="1" fill="#000"/><rect x="402" y="19" width="2" height="1" fill="#000"/><rect x="397" y="20" width="2" height="1" fill="#000"/><rect x="402" y="20" width="2" height="1" fill="#000"/><rect x="397" y="21" width="2" height="1" fill="#000"/><rect x="402" y="21" width="2" height="1" fill="#000"/><rect x="397" y="22" width="2" height="1" fill="#000"/><rect x="402" y="22" width="2" height="1" fill="#000"/><rect x="405" y="14" width="2" height="1" fill="#000"/><rect x="405" y="15" width="2" height="1" fill="#000"/><rect x="405" y="16" width="2" height="1" fill="#000"/><rect x="405" y="17" width="2" height="1" fill="#000"/><rect x="405" y="18" width="2" height="1" fill="#000"/><rect x="405" y="19" width="2" height="1" fill="#000"/><rect x="405" y="20" width="2" height="1" fill="#000"/><rect x="405" y="21" width="5" height="1" fill="#000"/><rect x="405" y="22" width="5" height="1" fill="#000"/><rect x="411" y="14" width="4" height="1" fill="#000"/><rect x="410" y="15" width="6" height="1" fill="#000"/><rect x="410" y="16" width="2" height="1" fill="#000"/><rect x="414" y="16" width="2" height="1" fill="#000"/><rect x="410" y="17" width="3" height="1" fill="#000"/><rect x="411" y="18" width="4" height="1" fill="#000"/><rect x="413" y="19" width="3" height="1" fill="#000"/><rect x="410" y="20" width="2" height="1" fill="#000"/><rect x="414" y="20" width="2" height="1" fill="#000"/><rect x="410" y="21" width="6" height="1" fill="#000"/><rect x="411" y="22" width="4" height="1" fill="#000"/><rect x="563" y="13" width="6" height="1" fill="#000"/><rect x="563" y="14" width="6" height="1" fill="#000"/><rect x="565" y="15" width="2" height="1" fill="#000"/><rect x="565" y="16" width="2" height="1" fill="#000"/><rect x="565" y="17" width="2" height="1" fill="#000"/><rect x="565" y="18" width="2" height="1" fill="#000"/><rect x="565" y="19" width="2" height="1" fill="#000"/><rect x="565" y="20" width="2" height="1" fill="#000"/><rect x="565" y="21" width="2" height="1" fill="#000"/><rect x="565" y="22" width="2" height="1" fill="#000"/><rect x="570" y="13" width="2" height="1" fill="#000"/><rect x="573" y="13" width="2" height="1" fill="#000"/><rect x="570" y="14" width="2" height="1" fill="#000"/><rect x="573" y="14" width="2" height="1" fill="#000"/><rect x="570" y="15" width="2" height="1" fill="#000"/><rect x="573" y="15" width="2" height="1" fill="#000"/><rect x="570" y="16" width="2" height="1" fill="#000"/><rect x="573" y="16" width="2" height="1" fill="#000"/><rect x="570" y="17" width="5" height="1" fill="#000"/><rect x="570" y="18" width="5" height="1" fill="#000"/><rect x="570" y="19" width="2" height="1" fill="#000"/><rect x="573" y="19" width="2" height="1" fill="#000"/><rect x="570" y="20" width="2" height="1" fill="#000"/><rect x="573" y="20" width="2" height="1" fill="#000"/><rect x="570" y="21" width="2" height="1" fill="#000"/><rect x="573" y="21" width="2" height="1" fill="#000"/><rect x="570" y="22" width="2" height="1" fill="#000"/><rect x="573" y="22" width="2" height="1" fill="#000"/><rect x="576" y="13" width="4" height="1" fill="#000"/><rect x="576" y="14" width="5" height="1" fill="#000"/><rect x="576" y="15" width="2" height="1" fill="#000"/><rect x="580" y="15" width="2" height="1" fill="#000"/><rect x="576" y="16" width="2" height="1" fill="#000"/><rect x="580" y="16" width="2" height="1" fill="#000"/><rect x="576" y="17" width="2" height="1" fill="#000"/><rect x="580" y="17" width="2" height="1" fill="#000"/><rect x="576" y="18" width="2" height="1" fill="#000"/><rect x="580" y="18" width="2" height="1" fill="#000"/><rect x="576" y="19" width="2" height="1" fill="#000"/><rect x="580" y="19" width="2" height="1" fill="#000"/><rect x="576" y="20" width="2" height="1" fill="#000"/><rect x="580" y="20" width="2" height="1" fill="#000"/><rect x="576" y="21" width="5" height="1" fill="#000"/><rect x="576" y="22" width="4" height="1" fill="#000"/><rect x="589" y="13" width="2" height="1" fill="#000"/><rect x="589" y="14" width="2" height="1" fill="#000"/><rect x="589" y="15" width="2" height="1" fill="#000"/><rect x="589" y="16" width="2" height="1" fill="#000"/><rect x="589" y="17" width="2" height="1" fill="#000"/><rect x="589" y="18" width="2" height="1" fill="#000"/><rect x="589" y="19" width="2" height="1" fill="#000"/><rect x="589" y="20" width="2" height="1" fill="#000"/><rect x="589" y="21" width="2" height="1" fill="#000"/><rect x="589" y="22" width="2" height="1" fill="#000"/><rect x="593" y="13" width="2" height="1" fill="#000"/><rect x="598" y="13" width="2" height="1" fill="#000"/><rect x="593" y="14" width="3" height="1" fill="#000"/><rect x="597" y="14" width="3" height="1" fill="#000"/><rect x="593" y="15" width="7" height="1" fill="#000"/><rect x="593" y="16" width="7" height="1" fill="#000"/><rect x="593" y="17" width="2" height="1" fill="#000"/><rect x="596" y="17" width="1" height="1" fill="#000"/><rect x="598" y="17" width="2" height="1" fill="#000"/><rect x="593" y="18" width="2" height="1" fill="#000"/><rect x="598" y="18" width="2" height="1" fill="#000"/><rect x="593" y="19" width="2" height="1" fill="#000"/><rect x="598" y="19" width="2" height="1" fill="#000"/><rect x="593" y="20" width="2" height="1" fill="#000"/><rect x="598" y="20" width="2" height="1" fill="#000"/><rect x="593" y="21" width="2" height="1" fill="#000"/><rect x="598" y="21" width="2" height="1" fill="#000"/><rect x="593" y="22" width="2" height="1" fill="#000"/><rect x="598" y="22" width="2" height="1" fill="#000"/><rect x="601" y="13" width="4" height="1" fill="#000"/><rect x="601" y="14" width="5" height="1" fill="#000"/><rect x="601" y="15" width="2" height="1" fill="#000"/><rect x="605" y="15" width="2" height="1" fill="#000"/><rect x="601" y="16" width="2" height="1" fill="#000"/><rect x="605" y="16" width="2" height="1" fill="#000"/><rect x="601" y="17" width="2" height="1" fill="#000"/><rect x="605" y="17" width="2" height="1" fill="#000"/><rect x="601" y="18" width="2" height="1" fill="#000"/><rect x="605" y="18" width="2" height="1" fill="#000"/><rect x="601" y="19" width="2" height="1" fill="#000"/><rect x="605" y="19" width="2" height="1" fill="#000"/><rect x="601" y="20" width="2" height="1" fill="#000"/><rect x="605" y="20" width="2" height="1" fill="#000"/><rect x="601" y="21" width="5" height="1" fill="#000"/><rect x="601" y="22" width="4" height="1" fill="#000"/><rect x="628" y="13" width="4" height="1" fill="#00f"/><rect x="627" y="14" width="6" height="1" fill="#00f"/><rect x="627" y="15" width="2" height="1" fill="#00f"/><rect x="631" y="15" width="2" height="1" fill="#00f"/><rect x="627" y="16" width="2" height="1" fill="#00f"/><rect x="631" y="16" width="2" height="1" fill="#00f"/><rect x="627" y="17" width="2" height="1" fill="#00f"/><rect x="631" y="17" width="2" height="1" fill="#00f"/><rect x="627" y="18" width="2" height="1" fill="#00f"/><rect x="631" y="18" width="2" height="1" fill="#00f"/><rect x="627" y="19" width="2" height="1" fill="#00f"/><rect x="631" y="19" width="2" height="1" fill="#00f"/><rect x="627" y="20" width="2" height="1" fill="#00f"/><rect x="631" y="20" width="2" height="1" fill="#00f"/><rect x="627" y="21" width="6" height="1" fill="#00f"/><rect x="628" y="22" width="4" height="1" fill="#00f"/><rect x="646" y="13" width="1" height="1" fill="#000"/><rect x="651" y="13" width="1" height="1" fill="#000"/><rect x="646" y="14" width="2" height="1" fill="#000"/><rect x="650" y="14" width="2" height="1" fill="#000"/><rect x="646" y="15" width="6" height="1" fill="#000"/><rect x="646" y="16" width="6" height="1" fill="#000"/><rect x="646" y="17" width="2" height="1" fill="#000"/><rect x="650" y="17" width="2" height="1" fill="#000"/><rect x="646" y="18" width="2" height="1" fill="#000"/><rect x="650" y="18" width="2" height="1" fill="#000"/><rect x="646" y="19" width="2" height="1" fill="#000"/><rect x="650" y="19" width="2" height="1" fill="#000"/><rect x="646" y="20" width="2" height="1" fill="#000"/><rect x="650" y="20" width="2" height="1" fill="#000"/><rect x="646" y="21" width="2" height="1" fill="#000"/><rect x="650" y="21" width="2" height="1" fill="#000"/><rect x="655" y="13" width="2" height="1" fill="#000"/><rect x="654" y="14" width="4" height="1" fill="#000"/><rect x="654" y="15" width="4" height="1" fill="#000"/><rect x="653" y="16" width="2" height="1" fill="#000"/><rect x="657" y="16" width="2" height="1" fill="#000"/><rect x="653" y="17" width="2" height="1" fill="#000"/><rect x="657" y="17" width="2" height="1" fill="#000"/><rect x="653" y="18" width="6" height="1" fill="#000"/><rect x="653" y="19" width="6" height="1" fill="#000"/><rect x="653" y="20" width="2" height="1" fill="#000"/><rect x="657" y="20" width="2" height="1" fill="#000"/><rect x="653" y="21" width="2" height="1" fill="#000"/><rect x="657" y="21" width="2" height="1" fill="#000"/><rect x="659" y="13" width="2" height="1" fill="#000"/><rect x="663" y="13" width="2" height="1" fill="#000"/><rect x="659" y="14" width="2" height="1" fill="#000"/><rect x="663" y="14" width="2" height="1" fill="#000"/><rect x="660" y="15" width="4" height="1" fill="#000"/><rect x="660" y="16" width="4" height="1" fill="#000"/><rect x="661" y="17" width="2" height="1" fill="#000"/><rect x="660" y="18" width="4" height="1" fill="#000"/><rect x="660" y="19" width="4" height="1" fill="#000"/><rect x="659" y="20" width="2" height="1" fill="#000"/><rect x="663" y="20" width="2" height="1" fill="#000"/><rect x="659" y="21" width="2" height="1" fill="#000"/><rect x="663" y="21" width="2" height="1" fill="#000"/><rect x="673" y="14" width="2" height="1" fill="#000"/><rect x="672" y="15" width="4" height="1" fill="#000"/><rect x="671" y="16" width="2" height="1" fill="#000"/><rect x="675" y="16" width="2" height="1" fill="#000"/><rect x="671" y="17" width="2" height="1" fill="#000"/><rect x="675" y="17" width="2" height="1" fill="#000"/><rect x="671" y="18" width="6" height="1" fill="#000"/><rect x="671" y="19" width="6" height="1" fill="#000"/><rect x="671" y="20" width="2" height="1" fill="#000"/><rect x="675" y="20" width="2" height="1" fill="#000"/><rect x="671" y="21" width="2" height="1" fill="#000"/><rect x="675" y="21" width="2" height="1" fill="#000"/><rect x="677" y="14" width="2" height="1" fill="#000"/><rect x="681" y="14" width="2" height="1" fill="#000"/><rect x="677" y="15" width="2" height="1" fill="#000"/><rect x="681" y="15" width="2" height="1" fill="#000"/><rect x="677" y="16" width="2" height="1" fill="#000"/><rect x="681" y="16" width="2" height="1" fill="#000"/><rect x="677" y="17" width="2" height="1" fill="#000"/><rect x="681" y="17" width="2" height="1" fill="#000"/><rect x="678" y="18" width="4" height="1" fill="#000"/><rect x="678" y="19" width="4" height="1" fill="#000"/><rect x="679" y="20" width="2" height="1" fill="#000"/><rect x="679" y="21" width="2" height="1" fill="#000"/><rect x="685" y="14" width="4" height="1" fill="#000"/><rect x="684" y="15" width="6" height="1" fill="#000"/><rect x="684" y="16" width="2" height="1" fill="#000"/><rect x="684" y="17" width="2" height="1" fill="#000"/><rect x="687" y="17" width="3" height="1" fill="#000"/><rect x="684" y="18" width="2" height="1" fill="#000"/><rect x="687" y="18" width="3" height="1" fill="#000"/><rect x="684" y="19" width="2" height="1" fill="#000"/><rect x="688" y="19" width="2" height="1" fill="#000"/><rect x="684" y="20" width="6" height="1" fill="#000"/><rect x="685" y="21" width="4" height="1" fill="#000"/><rect x="422" y="19" width="18" height="1" fill="#000"/><rect x="422" y="21" width="1" height="1" fill="#00f"/><rect x="422" y="22" width="1" height="1" fill="#00f"/><rect x="423" y="17" width="1" height="1" fill="#00f"/><rect x="423" y="18" width="1" height="1" fill="#00f"/><rect x="423" y="20" width="1" height="1" fill="#00f"/><rect x="424" y="16" width="1" height="1" fill="#00f"/><rect x="425" y="14" width="1" height="1" fill="#00f"/><rect x="425" y="15" width="1" height="1" fill="#00f"/><rect x="425" y="16" width="1" height="1" fill="#00f"/><rect x="426" y="13" width="1" height="1" fill="#00f"/><rect x="426" y="14" width="1" height="1" fill="#00f"/><rect x="427" y="13" width="1" height="1" fill="#00f"/><rect x="427" y="14" width="1" height="1" fill="#00f"/><rect x="428" y="14" width="1" height="1" fill="#00f"/><rect x="428" y="15" width="1" height="1" fill="#00f"/><rect x="428" y="16" width="1" height="1" fill="#00f"/><rect x="429" y="17" width="1" height="1" fill="#00f"/><rect x="429" y="18" width="1" height="1" fill="#00f"/><rect x="429" y="20" width="1" height="1" fill="#00f"/><rect x="430" y="21" width="1" height="1" fill="#00f"/><rect x="431" y="22" width="1" height="1" fill="#00f"/><rect x="432" y="22" width="1" height="1" fill="#00f"/><rect x="433" y="22" width="1" height="1" fill="#00f"/><rect x="434" y="22" width="1" height="1" fill="#00f"/><rect x="435" y="18" width="1" height="1" fill="#00f"/><rect x="435" y="19" width="1" height="1" fill="#00f"/><rect x="435" y="20" width="1" height="1" fill="#00f"/><rect x="435" y="21" width="1" height="1" fill="#00f"/><rect x="436" y="16" width="1" height="1" fill="#00f"/><rect x="436" y="17" width="1" height="1" fill="#00f"/><rect x="437" y="15" width="1" height="1" fill="#00f"/><rect x="438" y="15" width="1" height="1" fill="#00f"/><rect x="439" y="15" width="1" height="1" fill="#00f"/><rect x="474" y="16" width="4" height="1" fill="#00f"/><rect x="478" y="16" width="4" height="1" fill="#f00"/><rect x="484" y="16" width="2" height="1" fill="#00f"/><rect x="473" y="17" width="2" height="1" fill="#00f"/><rect x="476" y="17" width="2" height="1" fill="#f00"/><rect x="481" y="17" width="2" height="1" fill="#f00"/><rect x="483" y="17" width="1" height="1" fill="#00f"/><rect x="486" y="17" width="2" height="1" fill="#00f"/><rect x="472" y="18" width="2" height="1" fill="#00f"/><rect x="475" y="18" width="2" height="1" fill="#f00"/><rect x="478" y="18" width="1" height="1" fill="#00f"/><rect x="482" y="18" width="1" height="1" fill="#f00"/><rect x="483" y="18" width="1" height="1" fill="#00f"/><rect x="487" y="18" width="2" height="1" fill="#00f"/><rect x="472" y="19" width="1" height="1" fill="#00f"/><rect x="474" y="19" width="2" height="1" fill="#f00"/><rect x="478" y="19" width="1" height="1" fill="#00f"/><rect x="482" y="19" width="2" height="1" fill="#f00"/><rect x="488" y="19" width="1" height="1" fill="#00f"/><rect x="472" y="20" width="1" height="1" fill="#00f"/><rect x="474" y="20" width="1" height="1" fill="#f00"/><rect x="478" y="20" width="2" height="1" fill="#00f"/><rect x="482" y="20" width="3" height="1" fill="#f00"/><rect x="489" y="20" width="1" height="1" fill="#00f"/><rect x="473" y="21" width="2" height="1" fill="#f00"/><rect x="479" y="21" width="1" height="1" fill="#00f"/><rect x="483" y="21" width="5" height="1" fill="#f00"/><rect x="479" y="22" width="5" height="1" fill="#00f"/><rect x="487" y="22" width="2" height="1" fill="#f00"/><rect x="488" y="23" width="2" height="1" fill="#f00"/><rect x="489" y="24" width="1" height="1" fill="#f00"/><rect x="507" y="13" width="5" height="1" fill="#000"/><rect x="506" y="14" width="7" height="1" fill="#000"/><rect x="506" y="15" width="2" height="1" fill="#000"/><rect x="511" y="15" width="2" height="1" fill="#000"/><rect x="506" y="16" width="3" height="1" fill="#000"/><rect x="507" y="17" width="5" height="1" fill="#000"/><rect x="508" y="18" width="5" height="1" fill="#000"/><rect x="511" y="19" width="2" height="1" fill="#000"/><rect x="506" y="20" width="2" height="1" fill="#000"/><rect x="511" y="20" width="2" height="1" fill="#000"/><rect x="506" y="21" width="7" height="1" fill="#000"/><rect x="507" y="22" width="5" height="1" fill="#000"/><rect x="516" y="16" width="5" height="1" fill="#000"/><rect x="515" y="17" width="6" height="1" fill="#000"/><rect x="515" y="18" width="2" height="1" fill="#000"/><rect x="519" y="18" width="2" height="1" fill="#000"/><rect x="515" y="19" width="2" height="1" fill="#000"/><rect x="519" y="19" width="2" height="1" fill="#000"/><rect x="515" y="20" width="2" height="1" fill="#000"/><rect x="519" y="20" width="2" height="1" fill="#000"/><rect x="515" y="21" width="6" height="1" fill="#000"/><rect x="516" y="22" width="5" height="1" fill="#000"/><rect x="519" y="23" width="2" height="1" fill="#000"/><rect x="515" y="24" width="6" height="1" fill="#000"/><rect x="516" y="25" width="4" height="1" fill="#000"/><rect x="532" y="13" width="5" height="1" fill="#000"/><rect x="531" y="14" width="7" height="1" fill="#000"/><rect x="531" y="15" width="2" height="1" fill="#000"/><rect x="536" y="15" width="2" height="1" fill="#000"/><rect x="536" y="16" width="2" height="1" fill="#000"/><rect x="533" y="17" width="4" height="1" fill="#000"/><rect x="533" y="18" width="4" height="1" fill="#000"/><rect x="536" y="19" width="2" height="1" fill="#000"/><rect x="531" y="20" width="2" height="1" fill="#000"/><rect x="536" y="20" width="2" height="1" fill="#000"/><rect x="531" y="21" width="7" height="1" fill="#000"/><rect x="532" y="22" width="5" height="1" fill="#000"/><rect x="539" y="13" width="6" height="1" fill="#000"/><rect x="539" y="14" width="7" height="1" fill="#000"/><rect x="539" y="15" width="2" height="1" fill="#000"/><rect x="544" y="15" width="3" height="1" fill="#000"/><rect x="539" y="16" width="2" height="1" fill="#000"/><rect x="545" y="16" width="2" height="1" fill="#000"/><rect x="539" y="17" width="2" height="1" fill="#000"/><rect x="545" y="17" width="2" height="1" fill="#000"/><rect x="539" y="18" width="2" height="1" fill="#000"/><rect x="545" y="18" width="2" height="1" fill="#000"/><rect x="539" y="19" width="2" height="1" fill="#000"/><rect x="545" y="19" width="2" height="1" fill="#000"/><rect x="539" y="20" width="2" height="1" fill="#000"/><rect x="544" y="20" width="3" height="1" fill="#000"/><rect x="539" y="21" width="7" height="1" fill="#000"/><rect x="539" y="22" width="6" height="1" fill="#000"/><rect x="454" y="10" width="5" height="1" fill="#000"/><rect x="452" y="11" width="3" height="1" fill="#000"/><rect x="458" y="11" width="3" height="1" fill="#000"/><rect x="451" y="12" width="2" height="1" fill="#000"/><rect x="460" y="12" width="2" height="1" fill="#000"/><rect x="450" y="13" width="2" height="1" fill="#000"/><rect x="461" y="13" width="2" height="1" fill="#000"/><rect x="450" y="14" width="2" height="1" fill="#000"/><rect x="461" y="14" width="2" height="1" fill="#000"/><rect x="449" y="15" width="2" height="1" fill="#000"/><rect x="462" y="15" width="2" height="1" fill="#000"/><rect x="449" y="16" width="2" height="1" fill="#000"/><rect x="462" y="16" width="2" height="1" fill="#000"/><rect x="449" y="17" width="2" height="1" fill="#000"/><rect x="462" y="17" width="2" height="1" fill="#000"/><rect x="449" y="18" width="2" height="1" fill="#000"/><rect x="462" y="18" width="2" height="1" fill="#000"/><rect x="450" y="19" width="2" height="1" fill="#000"/><rect x="461" y="19" width="2" height="1" fill="#000"/><rect x="450" y="20" width="2" height="1" fill="#000"/><rect x="461" y="20" width="2" height="1" fill="#000"/><rect x="451" y="21" width="2" height="1" fill="#000"/><rect x="460" y="21" width="2" height="1" fill="#000"/><rect x="452" y="22" width="3" height="1" fill="#000"/><rect x="458" y="22" width="3" height="1" fill="#000"/><rect x="449" y="23" width="1" height="1" fill="#000"/><rect x="453" y="23" width="2" height="1" fill="#000"/><rect x="458" y="23" width="2" height="1" fill="#000"/><rect x="463" y="23" width="1" height="1" fill="#000"/><rect x="449" y="24" width="6" height="1" fill="#000"/><rect x="458" y="24" width="6" height="1" fill="#000"/><rect x="449" y="25" width="6" height="1" fill="#000"/><rect x="458" y="25" width="6" height="1" fill="#000"/></svg>
<!-- client sunken frame -->
<div style="position:absolute;left:6px;top:84px;width:879px;height:455px;background:#aca899"></div>
<div style="position:absolute;left:7px;top:85px;width:877px;height:453px;background:#716f64"></div>
<div style="position:absolute;left:883px;top:84px;width:2px;height:455px;background:#fff"></div>
<div style="position:absolute;left:7px;top:538px;width:878px;height:1px;background:#fff"></div>
<div id="client"></div>
<svg class="plot" width="786" height="384" viewBox="0 0 786 384" shape-rendering="crispEdges">
<rect x="0" y="0" width="786" height="384" fill="#000"/>
<rect x="0" y="0" width="1" height="1" fill="#999966"/><rect x="0" y="383" width="1" height="1" fill="#999966"/>
<line x1="2" x2="786" y1="35.5" y2="35.5" stroke="#c8c8c8" stroke-width="1" stroke-dasharray="3 3"/>
<line x1="2" x2="786" y1="70.5" y2="70.5" stroke="#c8c8c8" stroke-width="1" stroke-dasharray="3 3"/>
<line x1="2" x2="786" y1="105.5" y2="105.5" stroke="#c8c8c8" stroke-width="1" stroke-dasharray="3 3"/>
<line x1="2" x2="786" y1="139.5" y2="139.5" stroke="#c8c8c8" stroke-width="1" stroke-dasharray="3 3"/>
<line x1="2" x2="786" y1="174.5" y2="174.5" stroke="#c8c8c8" stroke-width="1" stroke-dasharray="3 3"/>
<line x1="2" x2="786" y1="209.5" y2="209.5" stroke="#c8c8c8" stroke-width="1" stroke-dasharray="3 3"/>
<line x1="2" x2="786" y1="244.5" y2="244.5" stroke="#c8c8c8" stroke-width="1" stroke-dasharray="3 3"/>
<line x1="2" x2="786" y1="278.5" y2="278.5" stroke="#c8c8c8" stroke-width="1" stroke-dasharray="3 3"/>
<line x1="2" x2="786" y1="313.5" y2="313.5" stroke="#c8c8c8" stroke-width="1" stroke-dasharray="3 3"/>
<line x1="2" x2="786" y1="348.5" y2="348.5" stroke="#c8c8c8" stroke-width="1" stroke-dasharray="3 3"/>
<line y1="3" y2="382" x1="19.5" x2="19.5" stroke="#c8c8c8" stroke-width="1" stroke-dasharray="3 3"/>
<line y1="3" y2="382" x1="42.5" x2="42.5" stroke="#c8c8c8" stroke-width="1" stroke-dasharray="3 3"/>
<line y1="3" y2="382" x1="62.5" x2="62.5" stroke="#c8c8c8" stroke-width="1" stroke-dasharray="3 3"/>
<line y1="3" y2="382" x1="79.5" x2="79.5" stroke="#c8c8c8" stroke-width="1" stroke-dasharray="3 3"/>
<line y1="3" y2="382" x1="94.5" x2="94.5" stroke="#c8c8c8" stroke-width="1" stroke-dasharray="3 3"/>
<line y1="3" y2="382" x1="195.5" x2="195.5" stroke="#c8c8c8" stroke-width="1" stroke-dasharray="3 3"/>
<line y1="3" y2="382" x1="246.5" x2="246.5" stroke="#c8c8c8" stroke-width="1" stroke-dasharray="3 3"/>
<line y1="3" y2="382" x1="282.5" x2="282.5" stroke="#c8c8c8" stroke-width="1" stroke-dasharray="3 3"/>
<line y1="3" y2="382" x1="311.5" x2="311.5" stroke="#c8c8c8" stroke-width="1" stroke-dasharray="3 3"/>
<line y1="3" y2="382" x1="334.5" x2="334.5" stroke="#c8c8c8" stroke-width="1" stroke-dasharray="3 3"/>
<line y1="3" y2="382" x1="353.5" x2="353.5" stroke="#c8c8c8" stroke-width="1" stroke-dasharray="3 3"/>
<line y1="3" y2="382" x1="370.5" x2="370.5" stroke="#c8c8c8" stroke-width="1" stroke-dasharray="3 3"/>
<line y1="3" y2="382" x1="385.5" x2="385.5" stroke="#c8c8c8" stroke-width="1" stroke-dasharray="3 3"/>
<line y1="3" y2="382" x1="486.5" x2="486.5" stroke="#c8c8c8" stroke-width="1" stroke-dasharray="3 3"/>
<line y1="3" y2="382" x1="537.5" x2="537.5" stroke="#c8c8c8" stroke-width="1" stroke-dasharray="3 3"/>
<line y1="3" y2="382" x1="573.5" x2="573.5" stroke="#c8c8c8" stroke-width="1" stroke-dasharray="3 3"/>
<line y1="3" y2="382" x1="602.5" x2="602.5" stroke="#c8c8c8" stroke-width="1" stroke-dasharray="3 3"/>
<line y1="3" y2="382" x1="625.5" x2="625.5" stroke="#c8c8c8" stroke-width="1" stroke-dasharray="3 3"/>
<line y1="3" y2="382" x1="644.5" x2="644.5" stroke="#c8c8c8" stroke-width="1" stroke-dasharray="3 3"/>
<line y1="3" y2="382" x1="661.5" x2="661.5" stroke="#c8c8c8" stroke-width="1" stroke-dasharray="3 3"/>
<line y1="3" y2="382" x1="676.5" x2="676.5" stroke="#c8c8c8" stroke-width="1" stroke-dasharray="3 3"/>
<line y1="3" y2="382" x1="777.5" x2="777.5" stroke="#c8c8c8" stroke-width="1" stroke-dasharray="3 3"/>
<rect x="106" y="2" width="2" height="381" fill="#c0c0c0"/>
<rect x="397" y="2" width="2" height="381" fill="#c0c0c0"/>
<rect x="688" y="2" width="2" height="381" fill="#c0c0c0"/>
<polyline points="1.0,383.0 0.9,383.0 88.5,383.0 139.8,383.0 176.1,383.0 204.3,383.0 227.4,383.0 246.9,383.0 263.7,383.0 278.6,383.0 291.9,372.0 304.0,383.0 315.0,383.0 325.1,361.0 334.5,377.0 343.2,363.0 351.3,349.5 359.0,337.0 366.2,323.5 373.1,309.5 379.5,324.0 385.7,191.0 391.6,117.0 397.7,94.5 402.7,104.5 407.8,155.0 412.8,282.0 417.6,307.0 422.2,319.0 426.6,331.0 430.9,343.0 434.9,360.0 438.9,360.5 442.8,368.0 446.6,376.0 450.3,383.0 453.8,369.5 457.3,383.0 460.7,383.0 463.9,383.0 467.1,383.0 470.3,383.0 473.3,383.0 476.3,383.0 479.2,383.0 482.0,383.0 484.8,383.0 487.5,383.0 490.2,383.0 492.8,383.0 495.3,383.0 497.8,383.0 500.3,383.0 502.7,383.0 505.1,383.0 507.4,383.0 509.7,383.0 511.9,383.0 514.1,383.0 516.3,378.5 518.4,383.0 520.5,383.0 522.5,383.0 524.5,383.0 526.5,383.0 528.5,383.0 530.4,383.0 532.3,383.0 534.2,383.0 536.0,383.0 537.9,383.0 539.7,383.0 541.4,383.0 543.2,383.0 544.9,383.0 546.6,383.0 548.3,383.0 549.9,383.0 551.5,383.0 553.1,383.0 554.7,383.0 556.3,383.0 557.9,383.0 559.4,383.0 560.9,383.0 562.4,383.0 563.9,383.0 565.3,383.0 566.8,383.0 568.2,383.0 569.6,383.0 571.0,383.0 572.4,383.0 573.8,383.0 575.1,383.0 576.5,383.0 577.8,383.0 579.1,383.0 580.4,383.0 581.7,383.0 582.9,383.0 584.2,383.0 585.4,383.0 586.7,383.0 587.9,383.0 589.1,383.0 590.3,383.0 591.5,377.5 592.7,383.0 593.8,383.0 595.0,383.0 596.1,383.0 597.3,383.0 598.4,383.0 599.5,383.0 600.6,383.0 601.7,383.0 602.8,383.0 603.9,383.0 604.9,383.0 606.0,383.0 607.0,383.0 608.1,383.0 609.1,383.0 610.1,383.0 611.1,383.0 612.1,383.0 613.1,383.0 614.1,383.0 615.1,383.0 616.1,383.0 617.1,380.7 618.0,383.0 619.0,383.0 619.9,383.0 620.9,383.0 621.8,383.0 622.7,383.0 623.6,383.0 624.6,383.0 625.5,383.0 626.4,383.0 627.3,383.0 628.1,383.0 629.0,383.0 629.9,383.0 630.8,383.0 631.6,383.0 632.5,383.0 633.3,383.0 634.2,383.0 635.0,383.0 635.9,383.0 636.7,374.5 637.5,374.5 638.3,383.0 639.1,374.5 639.9,383.0 640.7,383.0 641.5,383.0 642.3,383.0 643.1,383.0 643.9,383.0 644.7,383.0 645.5,383.0 646.2,383.0 647.0,383.0 647.7,383.0 648.5,383.0 649.2,383.0 650.0,383.0 650.7,383.0 651.5,383.0 652.2,383.0 652.9,383.0 653.7,383.0 654.4,383.0 655.1,381.5 655.8,383.0 656.5,383.0 657.2,383.0 657.9,383.0 658.6,383.0 659.3,383.0 660.0,383.0 660.7,383.0 661.4,383.0 662.0,383.0 662.7,383.0 663.4,383.0 664.1,383.0 664.7,383.0 665.4,383.0 666.0,383.0 666.7,383.0 667.3,383.0 668.0,383.0 668.6,383.0 669.3,383.0 669.9,383.0 670.5,383.0 671.2,383.0 671.8,383.0 672.4,383.0 673.0,383.0 673.7,383.0 674.3,383.0 674.9,383.0 675.5,383.0 676.1,383.0 676.7,383.0 677.3,383.0 677.9,383.0 678.5,383.0 679.1,383.0 679.7,383.0 680.3,383.0 680.8,383.0 681.4,383.0 682.0,383.0 682.6,383.0 683.2,383.0 683.7,383.0 684.3,383.0 684.9,373.5 685.4,383.0 686.0,383.0 686.5,383.0 687.1,383.0 687.6,383.0 688.2,383.0 688.7,383.0 689.3,383.0 689.8,383.0 690.4,383.0 690.9,383.0 691.5,383.0 692.0,383.0 692.5,383.0 693.0,383.0 693.6,383.0 694.1,383.0 694.6,383.0 695.1,383.0 695.7,383.0 696.2,383.0 696.7,383.0 697.2,383.0 697.7,383.0 698.2,383.0 698.7,383.0 699.2,383.0 699.7,383.0 700.2,383.0 700.7,383.0 701.2,383.0 701.7,383.0 702.2,383.0 702.7,383.0 703.2,383.0 703.7,383.0 704.2,383.0 704.7,383.0 705.1,383.0 705.6,383.0 706.1,383.0 706.6,383.0 707.0,383.0 707.5,383.0 708.0,383.0 708.5,383.0 708.9,383.0 709.4,383.0 709.9,383.0 710.3,383.0 710.8,383.0 711.2,383.0 711.7,383.0 712.2,383.0 712.6,383.0 713.1,383.0 713.5,383.0 714.0,383.0 714.4,383.0 714.8,383.0 715.3,383.0 715.7,383.0 716.2,383.0 716.6,383.0 717.1,383.0 717.5,383.0 717.9,383.0 718.4,383.0 718.8,383.0 719.2,383.0 719.7,383.0 720.1,383.0 720.5,383.0 720.9,383.0 721.4,383.0 721.8,383.0 722.2,383.0 722.6,383.0 723.0,383.0 723.5,383.0 723.9,383.0 724.3,383.0 724.7,383.0 725.1,383.0 725.5,383.0 725.9,383.0 726.3,383.0 726.7,383.0 727.1,383.0 727.5,383.0 727.9,383.0 728.3,383.0 728.7,383.0 729.1,383.0 729.5,383.0 729.9,383.0 730.3,383.0 730.7,383.0 731.1,383.0 731.5,383.0 731.9,383.0 732.3,383.0 732.7,383.0 733.1,383.0 733.4,383.0 733.8,383.0 734.2,383.0 734.6,383.0 735.0,383.0 735.3,383.0 735.7,383.0 736.1,383.0 736.5,383.0 736.8,383.0 737.2,383.0 737.6,383.0 738.0,383.0 738.3,383.0 738.7,383.0 739.1,383.0 739.4,383.0 739.8,383.0 740.2,383.0 740.5,383.0 740.9,383.0 741.3,383.0 741.6,383.0 742.0,383.0 742.3,383.0 742.7,383.0 743.1,383.0 743.4,383.0 743.8,383.0 744.1,383.0 744.5,383.0 744.8,383.0 745.2,383.0 745.5,383.0 745.9,383.0 746.2,383.0 746.6,383.0 746.9,383.0 747.3,383.0 747.6,383.0 747.9,383.0 748.3,383.0 748.6,383.0 749.0,383.0 749.3,383.0 749.6,383.0 750.0,383.0 750.3,383.0 750.6,383.0 751.0,383.0 751.3,383.0 751.7,383.0 752.0,383.0 752.3,383.0 752.6,383.0 753.0,383.0 753.3,383.0 753.6,383.0 754.0,383.0 754.3,383.0 754.6,383.0 754.9,381.5 755.3,383.0 755.6,383.0 755.9,383.0 756.2,383.0 756.5,383.0 756.9,383.0 757.2,383.0 757.5,383.0 757.8,383.0 758.1,383.0 758.4,383.0 758.8,383.0 759.1,383.0 759.4,383.0 759.7,383.0 760.0,383.0 760.3,383.0 760.6,383.0 760.9,383.0 761.3,383.0 761.6,383.0 761.9,383.0 762.2,383.0 762.5,383.0 762.8,383.0 763.1,383.0 763.4,383.0 763.7,383.0 764.0,383.0 764.3,383.0 764.6,383.0 764.9,383.0 765.2,383.0 765.5,383.0 765.8,383.0 766.1,383.0 766.4,383.0 766.7,383.0 767.0,383.0 767.3,383.0 767.6,383.0 767.9,383.0 768.2,383.0 768.4,383.0 768.7,383.0 769.0,383.0 769.3,383.0 769.6,383.0 769.9,383.0 770.2,383.0 770.5,383.0 770.8,383.0 771.0,383.0 771.3,383.0 771.6,383.0 771.9,383.0 772.2,383.0 772.5,383.0 772.7,368.2 773.0,383.0 773.3,383.0 773.6,383.0 773.9,383.0 774.1,383.0 774.4,383.0 774.7,383.0 775.0,383.0 775.2,383.0 775.5,383.0 775.8,383.0 776.1,383.0 776.3,383.0 776.6,383.0 776.9,383.0 777.2,383.0 777.4,383.0 777.7,383.0 778.0,383.0 778.2,383.0 778.5,383.0 778.8,383.0 779.1,383.0 779.3,383.0 779.6,383.0 779.9,383.0 780.1,383.0 780.4,383.0 780.6,383.0 780.9,383.0 781.2,383.0 781.4,383.0 781.7,383.0 782.0,383.0 782.2,383.0 782.5,383.0 782.7,383.0 783.0,383.0 783.3,383.0 783.5,383.0 783.8,383.0 784.0,383.0 784.3,383.0 784.6,383.0 784.8,383.0 785.1,383.0 785.3,383.0 785.6,383.0 785.8,383.0 786.1,383.0 786.3,383.0" fill="none" stroke="#0000ff" stroke-width="2.2" stroke-linejoin="bevel" shape-rendering="auto"/>
<rect x="735.5" y="1.5" width="50" height="19" fill="#000" stroke="#fff" stroke-width="1"/>
<rect x="737" y="7" width="21" height="2" fill="#00f"/>
</svg>
<div style="position:absolute;left:856px;top:97px;font-size:10.500px;line-height:13px;color:#fff;white-space:nowrap;letter-spacing:-0.350px">Ch#1</div>
<div class="yl" style="top:89px">10</div>
<div class="yl" style="top:123px">0</div>
<div class="yl" style="top:158px">-10</div>
<div class="yl" style="top:193px">-20</div>
<div class="yl" style="top:227px">-30</div>
<div class="yl" style="top:262px">-40</div>
<div class="yl" style="top:297px">-50</div>
<div class="yl" style="top:332px">-60</div>
<div class="yl" style="top:367px">-70</div>
<div class="yl" style="top:401px">-80</div>
<div class="yl" style="top:436px">-90</div>
<div class="yl" style="top:471px">-100</div>
<div class="xs" style="left:119px">60</div>
<div class="xs" style="left:156px">80</div>
<div class="xs" style="left:272px">200</div>
<div class="xs" style="left:359px">400</div>
<div class="xs" style="left:410px">600</div>
<div class="xs" style="left:447px">800</div>
<div class="xs" style="left:563px">2k</div>
<div class="xs" style="left:650px">4k</div>
<div class="xs" style="left:701px">6k</div>
<div class="xs" style="left:738px">8k</div>
<div class="xs" style="left:854px">20k</div>
<div class="xb" style="left:184px">100</div>
<div class="xb" style="left:475px">1k</div>
<div class="xb" style="left:766px">10k</div>
<div style="position:absolute;left:445px;top:508px;font-size:13px;line-height:15px;font-weight:bold;white-space:nowrap">frequency [Hz]</div>
<div style="position:absolute;left:-2px;top:294px;width:40px;height:16px;font-size:14px;line-height:16px;font-weight:bold;white-space:nowrap;text-align:center;transform:rotate(-90deg);transform-origin:center">[dB]</div>
<!-- level meter -->
<div style="position:absolute;left:80px;top:158px;width:7px;height:4px;background:#000"></div>
<div style="position:absolute;left:81px;top:159px;width:5px;height:2px;background:#f00"></div>
<div style="position:absolute;left:80px;top:190px;width:7px;height:288px;background:#000"></div>
<div style="position:absolute;left:81px;top:191px;width:5px;height:286px;background:#0f0"></div>
<!-- logo -->
<div style="position:absolute;left:8px;top:500px;width:73px;height:38px;background:#fff"></div>
<svg style="position:absolute;left:8px;top:500px" width="73" height="38" viewBox="0 0 73 38">
<g fill="#ff3333"><rect x="1" y="17" width="2.850" height="7"/><rect x="4" y="15" width="2.850" height="11"/><rect x="7" y="19" width="2.850" height="5"/><rect x="10" y="17" width="2.850" height="7"/><rect x="13" y="14" width="2.850" height="12"/><rect x="16" y="12" width="2.850" height="7"/><rect x="19" y="10" width="2.850" height="6"/><rect x="22" y="8" width="2.850" height="12"/><rect x="25" y="12" width="2.850" height="12"/><rect x="28" y="13" width="2.850" height="11"/><rect x="31" y="12" width="2.850" height="7"/><rect x="34" y="10" width="2.850" height="12"/><rect x="37" y="7" width="2.850" height="12"/><rect x="40" y="5" width="2.850" height="14"/><rect x="43" y="2" width="2.850" height="12"/><rect x="46" y="6" width="2.850" height="12"/><rect x="49" y="9" width="2.850" height="7"/><rect x="52" y="12" width="2.850" height="6"/><rect x="55" y="13" width="2.850" height="11"/><rect x="58" y="10" width="2.850" height="10"/><rect x="61" y="11" width="2.850" height="7"/><rect x="64" y="13" width="2.850" height="7"/><rect x="67" y="12" width="2.850" height="11"/><rect x="70" y="15" width="2.850" height="6"/></g></svg>
<div style="position:absolute;left:9px;top:527px;font-size:9px;line-height:11px;color:#000;white-space:nowrap;letter-spacing:0px;-webkit-text-stroke:0.3px #000">Dr-Jordan-Design</div>
<!-- status bar -->
<div style="position:absolute;left:6px;top:538px;width:878px;height:21px;background:#ece9d8;border-top:1px solid #fff;box-sizing:border-box"></div>
<div style="position:absolute;left:7px;top:543px;font-size:11px;line-height:14px">Ready</div>
<div class="pane" style="left:599px;width:42px;letter-spacing:-0.3px;padding-left:1px">44100</div>
<div class="pane" style="left:643px;width:60px;text-align:center;padding-left:0;letter-spacing:-0.3px">1024</div>
<div class="pane" style="left:705px;width:42px;letter-spacing:-0.4px;padding-left:1px">23ms</div>
<div class="pane" style="left:749px;width:27px"></div>
<div class="pane" style="left:778px;width:88px;letter-spacing:-0.55px;padding-left:0px">Blackman</div>
<svg style="position:absolute;left:872px;top:545px" width="13" height="13" viewBox="0 0 13 13"><path d="M12 1L1 12M12 5L5 12M12 9L9 12" stroke="#aca899" stroke-width="1.400"/><path d="M12 2L2 12M12 6L6 12M12 10L10 12" stroke="#fff" stroke-width="1"/></svg>
</div>
</div>
</body></html>
